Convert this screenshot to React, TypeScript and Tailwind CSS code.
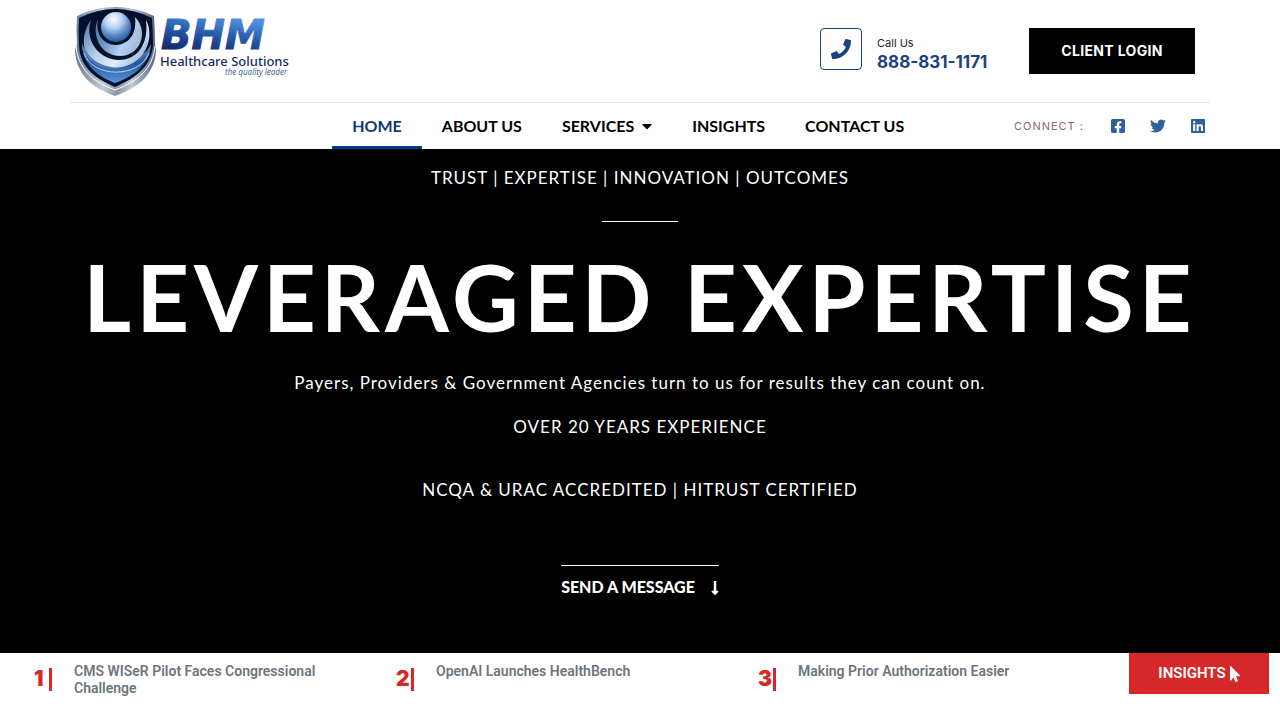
import { FaFacebookSquare, FaLinkedin, FaPhone, FaTwitter, FaCaretDown, FaLongArrowAltDown, FaMousePointer } from 'react-icons/fa'

const navItems = ['HOME', 'ABOUT US', 'SERVICES', 'INSIGHTS', 'CONTACT US']

const socials = [
  { label: 'Facebook', Icon: FaFacebookSquare },
  { label: 'Twitter', Icon: FaTwitter },
  { label: 'LinkedIn', Icon: FaLinkedin },
]

const headlines = [
  'CMS WISeR Pilot Faces Congressional Challenge',
  'OpenAI Launches HealthBench',
  'Making Prior Authorization Easier',
]

function Logo() {
  return (
    <svg viewBox="70 0 224 100" className="h-25 w-56" role="img" aria-label="BHM Healthcare Solutions">
      <defs>
        <linearGradient id="rim" x1="0" y1="0" x2="1" y2="0">
          <stop offset="0" stopColor="#6c7b93" />
          <stop offset="0.35" stopColor="#c4cbd6" />
          <stop offset="0.52" stopColor="#8a95a8" />
          <stop offset="0.7" stopColor="#c4cbd6" />
          <stop offset="1" stopColor="#54637d" />
        </linearGradient>
        <linearGradient id="arc" x1="0" y1="0.2" x2="1" y2="0.8">
          <stop offset="0" stopColor="#6486b0" />
          <stop offset="0.35" stopColor="#b4cbe6" />
          <stop offset="0.65" stopColor="#e4eef9" />
          <stop offset="1" stopColor="#86a9d4" />
        </linearGradient>
        <linearGradient id="arcInner" x1="0" y1="0" x2="1" y2="0.4">
          <stop offset="0" stopColor="#4d6e9d" />
          <stop offset="0.4" stopColor="#6c97c9" />
          <stop offset="0.75" stopColor="#b5d0ee" />
          <stop offset="1" stopColor="#a3bddc" />
        </linearGradient>
        <linearGradient id="arcDeep" x1="0" y1="0" x2="0" y2="1">
          <stop offset="0" stopColor="#7399c7" />
          <stop offset="0.5" stopColor="#24569d" />
          <stop offset="1" stopColor="#5a97dc" />
        </linearGradient>
        <radialGradient id="ball" cx="0.42" cy="0.25" r="0.75">
          <stop offset="0" stopColor="#ffffff" />
          <stop offset="0.4" stopColor="#b1cfee" />
          <stop offset="0.7" stopColor="#5c8cc6" />
          <stop offset="1" stopColor="#255ba5" />
        </radialGradient>
        <linearGradient id="word" x1="0" y1="0.9" x2="0.3" y2="0">
          <stop offset="0.15" stopColor="#152c68" />
          <stop offset="0.5" stopColor="#20509f" />
          <stop offset="1" stopColor="#4f90de" />
        </linearGradient>
        <clipPath id="shield">
          <path d="M115 9Q134 9 152 18Q153 32 153 46C151 64 139 77 115 87C91 77 80 64 79 46Q78 32 79 18Q97 9 115 9Z" />
        </clipPath>
      </defs>
      {/* silver edge, with a white gap between it and the shield */}
      <path d="M115 7Q136 7 154 16Q155 30 155 44L156 50C155 72 141 87 115 96C89 87 76 72 75 50L77 44Q76 30 77 16Q95 7 115 7Z" fill="url(#rim)" />
      <path d="M76 46C78 68 91 81 115 90C139 81 153 68 155 46" fill="none" stroke="#fff" strokeWidth="1" />
      <g clipPath="url(#shield)">
        <path d="M75 5H156V92H75Z" fill="#04112d" />
        {/* lower sweep */}
        <path d="M82 43C88 66 142 68 151 44C150 62 138 75 115 83C94 75 82 62 82 43Z" fill="url(#arcDeep)" />
        <path d="M84 53C92 78 139 79 149 53" fill="none" stroke="#b9d6f4" strokeWidth="1" />
        {/* outer sweep */}
        <path d="M91 20C78 38 84 59 98 65C113 70 132 69 143 54C151 43 151 29 146 20C149 43 138 60 119 60C99 60 84 40 91 20Z" fill="url(#arc)" />
        <path d="M83 42C86 58 100 67 119 68C103 72 87 64 83 42Z" fill="#4979b4" />
        {/* inner sweep */}
        <path d="M98 19C91 34 100 56 120 56C141 56 149 31 135 17C137 33 130 44 116 45C103 45 95 33 98 19Z" fill="url(#arcInner)" />
        <circle cx="116" cy="27" r="17" fill="#04112d" />
        <circle cx="116" cy="27" r="15" fill="url(#ball)" />
      </g>
      <text x="161" y="49" fontFamily="DejaVu Sans, sans-serif" fontSize="40" fontWeight="700" fontStyle="italic" fill="url(#word)" stroke="url(#word)" strokeWidth="1">BHM</text>
      <text x="160" y="66" fontFamily="Noto Sans, sans-serif" fontSize="13" fontWeight="500" fill="#172f62">Healthcare Solutions</text>
      <text x="225" y="75" fontFamily="Noto Sans, sans-serif" fontSize="8" fontStyle="italic" fill="#4a6795">the quality leader</text>
    </svg>
  )
}

export default function App() {
  return (
    <div className="bg-white font-[Lato,sans-serif]">
      <header className="mx-auto max-w-[1140px]">
        {/* top bar */}
        <div className="flex h-[103px] items-start justify-between border-b border-[#e6e6ef]">
          <a href="#home">
            <Logo />
          </a>
          <div className="flex items-start pt-7 pr-[15px] font-[Inter,sans-serif]">
            <a href="tel:8888311171" aria-label="Call us" className="flex size-[42px] items-center justify-center rounded border border-[#1a437e] text-[#1a437e]">
              <FaPhone size={20} />
            </a>
            <div className="ml-[15px] w-38 pt-[7px]">
              <p className="text-[11px] leading-4 text-[#222]">Call Us</p>
              <a href="tel:8888311171" className="block text-[17px] leading-[22px] font-bold text-[#1a437e]">888-831-1171</a>
            </div>
            <button className="h-[46px] w-[166px] bg-black text-sm font-bold tracking-wide text-white">CLIENT LOGIN</button>
          </div>
        </div>

        {/* main nav */}
        <div className="grid h-[46px] grid-cols-[23%_1fr_auto] items-stretch">
          <nav className="col-start-2 flex">
            {navItems.map((item) => (
              <a
                key={item}
                href="#"
                className={
                  item === 'HOME'
                    ? 'flex items-center border-b-3 border-[#063b85] px-5 pt-[3px] text-base font-bold text-[#12376f]'
                    : 'flex items-center border-b-3 border-transparent px-5 pt-[3px] text-base font-bold text-black'
                }
              >
                {item}
                {item === 'SERVICES' && <FaCaretDown className="ml-2 h-4 w-[10px]" />}
              </a>
            ))}
          </nav>
          <div className="flex items-center justify-end pr-1 font-[Inter,sans-serif]">
            <span className="mr-[26px] text-[11px] tracking-[1px] text-[#8a6a6a]">CONNECT :</span>
            <div className="flex gap-6">
              {socials.map(({ label, Icon }) => (
                <a key={label} href="#" aria-label={label} className="text-[#335f9f]">
                  <Icon size={16} />
                </a>
              ))}
            </div>
          </div>
        </div>
      </header>

      {/* hero */}
      <section className="flex flex-col items-center bg-black px-4 pt-[17px] pb-[54px] text-center text-[17px] leading-6 tracking-[1px] text-white">
        <p>TRUST | EXPERTISE | INNOVATION | OUTCOMES</p>
        <div className="mt-[31px] h-px w-19 bg-white" />
        <h1 className="mt-[25px] text-[92px] leading-[100px] font-bold tracking-[5px] whitespace-nowrap">LEVERAGED EXPERTISE</h1>
        <p className="mt-6">Payers, Providers &amp; Government Agencies turn to us for results they can count on.</p>
        <p className="mt-5">OVER 20 YEARS EXPERIENCE</p>
        <p className="mt-[39px]">NCQA &amp; URAC ACCREDITED | HITRUST CERTIFIED</p>
        <a href="#contact" className="mt-[63px] flex items-center gap-4 border-t border-white pt-[9px] text-base leading-6 font-black tracking-normal">
          SEND A MESSAGE
          <FaLongArrowAltDown className="mt-[2px] h-4 w-2" />
        </a>
      </section>

      {/* insights ticker */}
      <section className="flex items-start pr-[11px] pl-[34px] font-[Roboto,sans-serif]">
        <ol className="grid flex-1 grid-cols-3">
          {headlines.map((title, i) => (
            <li key={title} className="flex pt-[10px]">
              <span className="flex h-8 w-10 shrink-0 items-center font-[Inter,sans-serif] text-[21px] font-black text-[#d62828]">
                <span className="w-[15px]">{i + 1}</span>
                <span className="h-[23px] w-[3px] bg-[#d62828]" />
              </span>
              <a href="#" className="max-w-[280px] text-sm leading-[17px] font-semibold text-[#6c757d]">{title}</a>
            </li>
          ))}
        </ol>
        <button className="ml-[9px] flex h-[41px] w-[140px] items-center justify-center gap-1 bg-[#d62828] text-[15px] font-semibold text-white">
          INSIGHTS
          <FaMousePointer className="h-4 w-[10px]" />
        </button>
      </section>
    </div>
  )
}
